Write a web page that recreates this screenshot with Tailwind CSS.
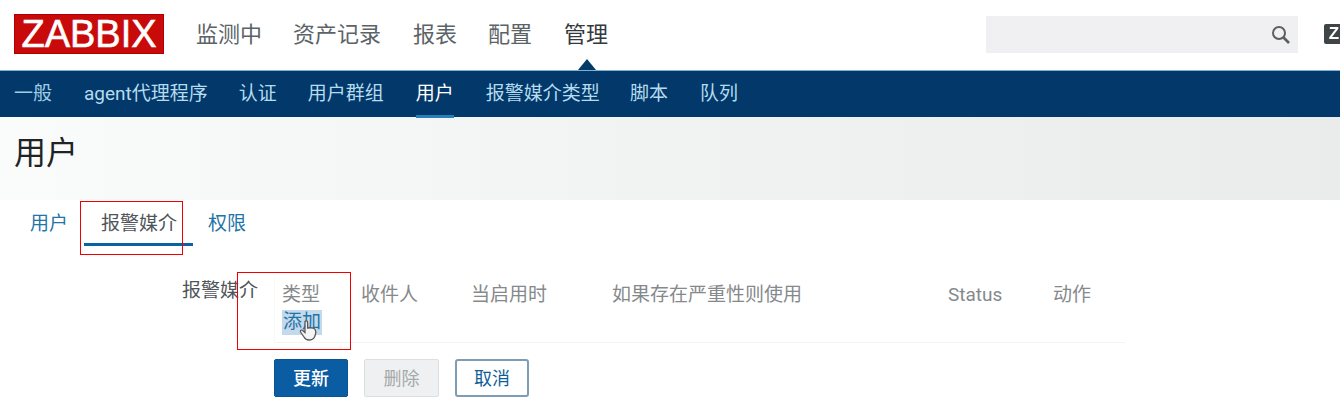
<!DOCTYPE html>
<html lang="zh-CN">
<head>
    <meta charset="UTF-8">
    <title>Zabbix 用户</title>
    <script src="https://cdn.jsdelivr.net/npm/@tailwindcss/browser@4"></script>
</head>
<body class="bg-white overflow-hidden font-['Roboto','Noto_Sans_CJK_SC',sans-serif]">
    <div class="relative w-[1340px] h-[419px] overflow-hidden blur-[0.5px]">

        <!-- top header -->
        <header class="h-[70px] bg-white flex items-center relative">
            <div class="ml-[14px] mt-[-2px] w-[150px] h-[40px] bg-[#c80a0a] border border-[#b00000] flex items-center justify-center text-white text-[38px] leading-none font-['Liberation_Sans',sans-serif] [-webkit-text-stroke:0.6px_white]">ZABBIX</div>
            <nav class="ml-[32px] mt-[-2px] flex items-center text-[22px] text-[#5b6367]">
                <span>监测中</span>
                <span class="ml-[31px]">资产记录</span>
                <span class="ml-[32px]">报表</span>
                <span class="ml-[31px]">配置</span>
                <span class="ml-[32px] text-[#33393c]">管理</span>
            </nav>
            <div class="absolute left-[986px] top-[16px] w-[312px] h-[37px] bg-[#f0f0f2] flex items-center justify-end pr-[8px]">
                <svg width="22" height="22" viewBox="0 0 22 22" fill="none" stroke="#5a5f63" class="mr-[-2px]">
                    <circle cx="9" cy="9" r="6" stroke-width="2"/>
                    <path d="M13.5 13.5L19 19" stroke-width="2.6"/>
                </svg>
            </div>
            <div class="absolute left-[1324px] top-[24px] w-[20px] h-[20px] bg-[#3f4446] rounded-[2px] text-white text-[17px] leading-[20px] font-bold text-center font-['Liberation_Sans',sans-serif]">Z</div>
            <div class="absolute left-[578px] top-[59px] w-0 h-0 border-l-[9px] border-r-[9px] border-b-[11px] border-l-transparent border-r-transparent border-b-[#023a68]"></div>
        </header>

        <!-- sub nav -->
        <nav class="h-[47px] bg-[#02386a] border-t border-[#7fb0cf] flex items-center pl-[14px] text-[19px] text-[#b5dcee] relative">
            <span class="text-[#9fcde4]">一般</span>
            <span class="ml-[32px]">agent代理程序</span>
            <span class="ml-[31px]">认证</span>
            <span class="ml-[31px]">用户群组</span>
            <span class="ml-[32px] text-white relative">用户
                <span class="absolute left-0 right-0 top-[35px] h-[3px] bg-[#2a7fb8]"></span>
            </span>
            <span class="ml-[32px]">报警媒介类型</span>
            <span class="ml-[30px]">脚本</span>
            <span class="ml-[32px]">队列</span>
        </nav>

        <!-- page area -->
        <main class="h-[302px] bg-white">
            <h1 class="h-[83px] pl-[14px] pt-[13px] text-[32px] leading-[46px] text-[#1f2426] bg-linear-to-r from-[#fafbfb] via-[#f1f3f3] to-[#eaecec]">用户</h1>

            <section class="relative pl-[14px] h-[219px] bg-white">
                <div class="h-[48px] flex text-[19px] leading-[48px]">
                    <span class="ml-[16px] text-[#1f74a8]">用户</span>
                    <span class="relative ml-[33px] text-[#4f5559]">报警媒介
                        <span class="absolute left-[-17px] right-[-16px] top-[43px] h-[3px] bg-[#0a62a5]"></span>
                    </span>
                    <span class="ml-[31px] text-[#1f74a8]">权限</span>
                </div>

                <div class="flex mt-[30px]">
                    <div class="w-[244px] text-right text-[19px] leading-[26px] text-[#4f5559] shrink-0">报警媒介</div>
                    <div class="ml-[16px]">
                        <div class="w-[851px] h-[65px] border-b border-[#f4f4f4] border-l border-l-[#f8f8f8] text-[19px] text-[#85898c] relative">
                            <div class="flex leading-[34px]">
                                <span class="w-[86px] pl-[7px]">类型</span>
                                <span class="w-[110px]">收件人</span>
                                <span class="w-[141px]">当启用时</span>
                                <span class="w-[336px]">如果存在严重性则使用</span>
                                <span class="w-[105px]">Status</span>
                                <span>动作</span>
                            </div>
                            <span class="absolute left-[7px] top-[32px] bg-[#c4d9eb] text-[#1f74a8] leading-[24px] h-[25px] px-[1px]">添加</span>
                            <svg class="absolute left-[24px] top-[41px]" width="20" height="24" viewBox="0 0 20 24" fill="#f4f4f4" stroke="#55595c" stroke-width="1.3">
                                <path d="M6 2.5c1-1.2 2.6-.6 2.6 1V9c2.5-.4 6.5 0 7.5 1.5 1 1.8.6 5-.6 7.5-1 2-3 3-5.5 3-2.5 0-4-1-5-3L1.5 13c-.6-1.5 1-2.5 2.2-1.5L6 13.500z"/>
                            </svg>
                        </div>
                        <div class="flex gap-[16px] mt-[16px] text-[18px]">
                            <button class="w-[74px] h-[38px] bg-[#0a5da3] border border-[#0a5490] rounded-[2px] text-white font-medium">更新</button>
                            <button class="w-[75px] h-[38px] bg-[#eef0f1] border border-[#dcdfe1] rounded-[2px] text-[#a5a9ab]">删除</button>
                            <button class="w-[74px] h-[38px] bg-white border-2 border-[#7d9db5] rounded-[3px] text-[#0f5f96]">取消</button>
                        </div>
                    </div>
                </div>
            </section>
        </main>

        <!-- red annotation boxes -->
        <div class="absolute left-[80px] top-[201px] w-[103px] h-[54px] border border-[#f00000]"></div>
        <div class="absolute left-[237px] top-[272px] w-[114px] h-[78px] border border-[#f00000]"></div>
    </div>
</body>
</html>
